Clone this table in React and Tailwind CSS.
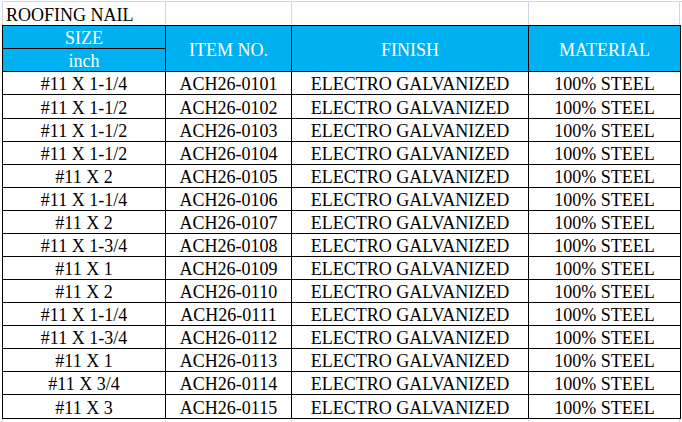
import React from "react";

const rows = [
  ["#11 X 1-1/4", "ACH26-0101"],
  ["#11 X 1-1/2", "ACH26-0102"],
  ["#11 X 1-1/2", "ACH26-0103"],
  ["#11 X 1-1/2", "ACH26-0104"],
  ["#11 X 2", "ACH26-0105"],
  ["#11 X 1-1/4", "ACH26-0106"],
  ["#11 X 2", "ACH26-0107"],
  ["#11 X 1-3/4", "ACH26-0108"],
  ["#11 X 1", "ACH26-0109"],
  ["#11 X 2", "ACH26-0110"],
  ["#11 X 1-1/4", "ACH26-0111"],
  ["#11 X 1-3/4", "ACH26-0112"],
  ["#11 X 1", "ACH26-0113"],
  ["#11 X 3/4", "ACH26-0114"],
  ["#11 X 3", "ACH26-0115"],
];

const tall = [1, 14];

export default function App() {
  return (
    <div className="w-[682px] h-[422px] overflow-hidden bg-white text-black text-[18px] leading-none font-['Liberation_Serif','Times_New_Roman',serif]">
      {/* top spreadsheet row */}
      <div className="mt-px h-[24px] ml-[2px] border-t border-l border-[#d0d7e5] grid grid-cols-[163px_126px_237px_151px]">
        <div className="border-r border-[#d0d7e5] flex items-center pl-[3px] pt-[2px] whitespace-nowrap">
          ROOFING NAIL
        </div>
        <div className="border-r border-[#d0d7e5]" />
        <div className="border-r border-[#d0d7e5]" />
        <div className="border-r border-[#d0d7e5]" />
      </div>

      {/* table */}
      <div className="ml-[2px] w-[679px] border-t border-l border-black grid grid-cols-[163px_126px_237px_152px]">
        {/* header */}
        <div className="h-[23px] pt-[2px] bg-[#00b0f0] text-white border-r border-b border-black flex items-center justify-center">
          SIZE
        </div>
        <div className="row-span-2 pt-[2px] bg-[#00b0f0] text-white border-r border-b border-black flex items-center justify-center">
          ITEM NO.
        </div>
        <div className="row-span-2 pt-[2px] bg-[#00b0f0] text-white border-r border-b border-black flex items-center justify-center">
          FINISH
        </div>
        <div className="row-span-2 pt-[2px] bg-[#00b0f0] text-white border-r border-b border-black flex items-center justify-center">
          MATERIAL
        </div>
        <div className="h-[23px] pt-[2px] bg-[#00b0f0] text-white border-r border-b border-black flex items-center justify-center">
          inch
        </div>

        {rows.map(([size, item], i) => {
          const h = tall.includes(i) ? "h-[24px]" : "h-[23px]";
          return (
            <React.Fragment key={item}>
              <div className={`${h} pt-[2px] border-r border-b border-black flex items-center justify-center whitespace-nowrap`}>
                {size}
              </div>
              <div className={`${h} pt-[2px] border-r border-b border-black flex items-center justify-center whitespace-nowrap`}>
                {item}
              </div>
              <div className={`${h} pt-[2px] border-r border-b border-black flex items-center justify-center whitespace-nowrap`}>
                ELECTRO GALVANIZED
              </div>
              <div className={`${h} pt-[2px] border-r border-b border-black flex items-center justify-center whitespace-nowrap`}>
                100% STEEL
              </div>
            </React.Fragment>
          );
        })}
      </div>

      {/* bottom gridlines */}
      <div className="h-[4px] ml-[2px] border-l border-[#d0d7e5] grid grid-cols-[163px_126px_237px_151px]">
        <div className="border-r border-[#d0d7e5]" />
        <div className="border-r border-[#d0d7e5]" />
        <div className="border-r border-[#d0d7e5]" />
        <div className="border-r border-[#d0d7e5]" />
      </div>
    </div>
  );
}
